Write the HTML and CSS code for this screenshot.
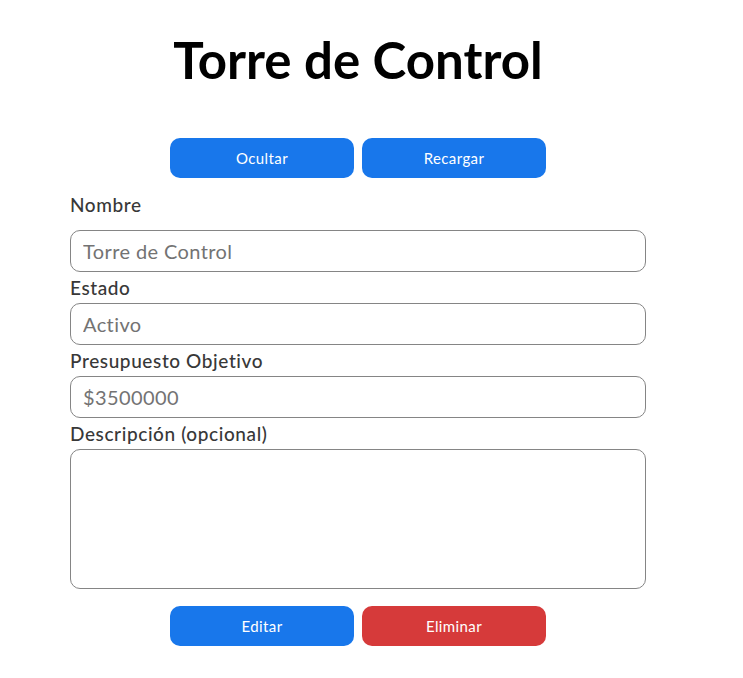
FILE: index.html
```html
<!DOCTYPE html>
<html lang="es">
<head>
<meta charset="utf-8">
<title>Torre de Control</title>
<link rel="stylesheet" href="styles.css">
</head>
<body>
<main class="page">
  <h1 class="title">Torre de Control</h1>
  <div class="actions">
    <button class="btn btn-blue" type="button">Ocultar</button>
    <button class="btn btn-blue" type="button">Recargar</button>
  </div>
  <form class="form">
    <label class="label label-first" for="nombre">Nombre</label>
    <input class="field" id="nombre" type="text" placeholder="Torre de Control">
    <label class="label" for="estado">Estado</label>
    <input class="field" id="estado" type="text" placeholder="Activo">
    <label class="label" for="presupuesto">Presupuesto Objetivo</label>
    <input class="field" id="presupuesto" type="text" placeholder="$3500000">
    <label class="label" for="descripcion">Descripción (opcional)</label>
    <textarea class="field area" id="descripcion"></textarea>
  </form>
  <div class="actions actions-bottom">
    <button class="btn btn-blue" type="button">Editar</button>
    <button class="btn btn-red" type="button">Eliminar</button>
  </div>
</main>
</body>
</html>
```
FILE: styles.css
```css
html, body {
  margin: 0;
  padding: 0;
  background: #ffffff;
}
body {
  font-family: Lato, "Open Sans", sans-serif;
  color: #333333;
}
.page {
  width: 576px;
  margin-left: 70px;
  display: flex;
  flex-direction: column;
}
.title {
  margin: 30px 0 0;
  font-size: 51px;
  line-height: 60px;
  font-weight: 700;
  color: #000000;
  text-align: center;
  letter-spacing: 0;
}
.actions {
  display: flex;
  justify-content: center;
  gap: 8px;
  margin-top: 48px;
}
.actions-bottom {
  margin-top: 17px;
}
.btn {
  width: 184px;
  height: 40px;
  border: none;
  border-radius: 10px;
  color: #ffffff;
  font-family: Lato, "Open Sans", sans-serif;
  font-size: 15px;
  letter-spacing: 0.4px;
  cursor: pointer;
}
.btn-blue {
  background: #1877eb;
}
.btn-red {
  background: #d63a3a;
}
.form {
  display: flex;
  flex-direction: column;
}
.label {
  font-size: 19px;
  line-height: 31px;
  font-weight: 500;
  letter-spacing: 0.6px;
  color: #383838;
}
.label-first {
  margin-top: 11px;
  margin-bottom: 10px;
}
.field {
  box-sizing: border-box;
  width: 576px;
  height: 42px;
  margin: 0;
  padding: 0 12px;
  border: 1px solid #858585;
  border-radius: 10px;
  font-family: Lato, "Open Sans", sans-serif;
  font-size: 20px;
  letter-spacing: 0.4px;
  color: #333333;
  background: #ffffff;
  outline: none;
}
.field::placeholder {
  color: #737373;
}
.area {
  height: 140px;
  resize: none;
  padding: 10px 12px;
}
```
